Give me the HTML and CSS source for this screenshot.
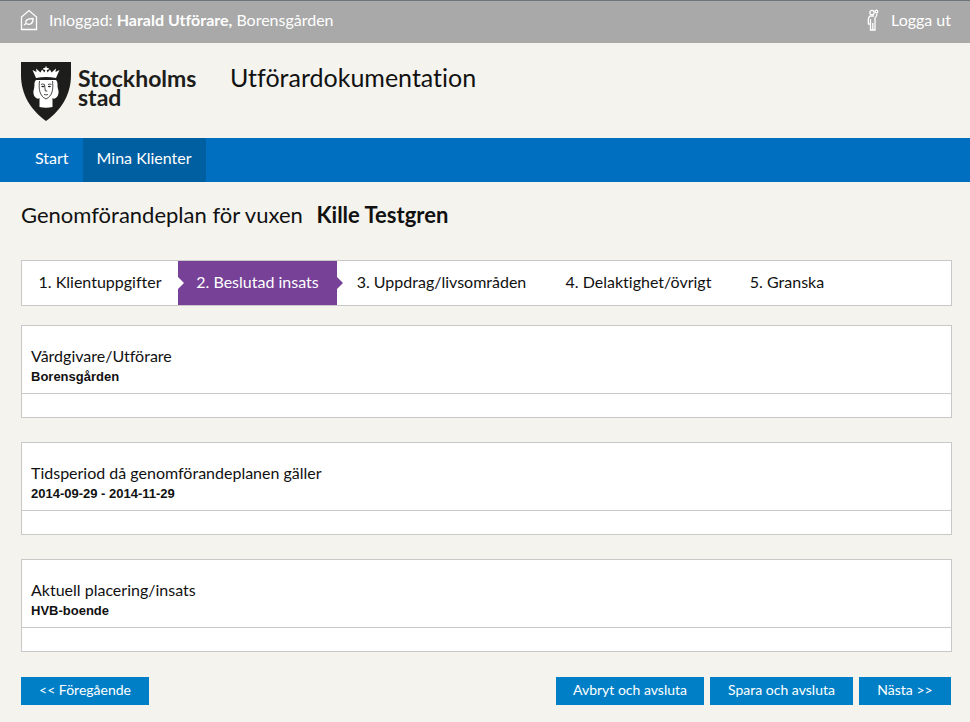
FILE: index.html
```html
<!DOCTYPE html>
<html lang="sv">
<head>
<meta charset="utf-8">
<meta name="viewport" content="width=device-width, initial-scale=1">
<title>Utförardokumentation</title>
<link rel="stylesheet" href="styles.css">
</head>
<body>
<div class="topbar">
  <div class="account">
    <svg class="icon-home" viewBox="0 0 18 22" aria-hidden="true">
      <path d="M1.500 20.500V8L9 1.500 16.500 8v12.500z"/>
      <path d="M4 16l2-1.500C5 11.500 7 9.500 13 9.500c.5 5-3 7-7 5"/>
    </svg>
    <span>Inloggad: <strong>Harald Utförare,</strong> Borensgården</span>
  </div>
  <a class="logout" href="#">
    <svg class="icon-person" viewBox="0 0 12 22" aria-hidden="true">
      <circle cx="5" cy="3.500" r="2.200"/>
      <circle cx="9.500" cy="2.500" r="1.300"/>
      <path d="M10 4.500c0 2-.8 3.500-2 4.500v12H3.500v-6H1.500c-.5-4-.5-7.500 2-8h3.500M3.500 10v5M5.800 14v7"/>
    </svg>
    <span>Logga ut</span>
  </a>
</div>
<header class="header">
  <a class="brand" href="#">
    <svg class="shield" viewBox="0 0 50 59" aria-hidden="true">
      <path fill="#1d1d1b" d="M0 0h50v13c0 20-10 35-25 46C10 48 0 33 0 13z"/>
      <g fill="#fff">
        <path d="M15 18c-2.500 3-1 5-2 9-1.500 4 0 8 3 9.500 1.200.4 2-.1 2.500-.6V45q6.500 1.500 13 0v-9.100c.5.500 1.300 1 2.500.6 3-1.500 4.500-5.500 3-9.500-1-4 .5-6-2-9z"/>
        <path d="M15 16L11.500 8l4 2-.5-3.500 4.500 4L21 7.500l2.500 3 .8-2.500-2-.5V6h2V4.500h1.400V6h2v1.500l-2 .5.8 2.500L29 7.500l1.500 3 4.500-4-.5 3.500 4-2L35 16q-10-2-20 0z"/>
      </g>
      <g fill="none" stroke="#1d1d1b" stroke-width=".8">
        <path d="M18.500 19c-1 8 0 15 6.500 18 6.500-3 7.500-10 6.500-18"/>
        <path d="M20 22.500q1.500-1 3.500 0l.8 6.500h2M27 22.500q2-1 3.500 0M23 32.500q2 .8 4 0"/>
      </g>
      <g fill="#1d1d1b">
        <ellipse cx="21.800" cy="24.500" rx="1.500" ry=".7"/>
        <ellipse cx="28.400" cy="24.500" rx="1.500" ry=".7"/>
      </g>
    </svg>
    <span class="brand-name"><span>Stockholms</span><span>stad</span></span>
  </a>
  <div class="app-title">Utförardokumentation</div>
</header>
<nav class="nav">
  <a href="#">Start</a>
  <a class="current" href="#" aria-current="page">Mina Klienter</a>
</nav>
<main class="content">
  <h1 class="page-title">Genomförandeplan för vuxen <strong>Kille Testgren</strong></h1>
  <nav class="steps" aria-label="Steg">
    <a href="#">1. Klientuppgifter</a>
    <a class="active" href="#" aria-current="step">2. Beslutad insats</a>
    <a href="#">3. Uppdrag/livsområden</a>
    <a href="#">4. Delaktighet/övrigt</a>
    <a href="#">5. Granska</a>
  </nav>
  <div class="cards">
    <section class="card">
      <h2>Vårdgivare/Utförare</h2>
      <p>Borensgården</p>
    </section>
    <section class="card">
      <h2>Tidsperiod då genomförandeplanen gäller</h2>
      <p>2014-09-29 - 2014-11-29</p>
    </section>
    <section class="card">
      <h2>Aktuell placering/insats</h2>
      <p>HVB-boende</p>
    </section>
  </div>
  <div class="actions">
    <button class="previous" type="button">&lt;&lt; Föregående</button>
    <button class="cancel" type="button">Avbryt och avsluta</button>
    <button class="save" type="button">Spara och avsluta</button>
    <button class="next" type="button">Nästa &gt;&gt;</button>
  </div>
</main>
</body>
</html>
```
FILE: styles.css
```css
* {
  box-sizing: border-box;
}

body {
  margin: 0;
  background: #f4f3ee;
  color: #111;
  font: 16px/20px Lato, sans-serif;
  font-variant-ligatures: none;
}

a {
  color: inherit;
  text-decoration: none;
}

.topbar {
  display: flex;
  justify-content: space-between;
  height: 43px;
  padding: 0 19px 0 20px;
  border-top: 1px solid #6d737c;
  background: #a9a9a9;
  color: #fff;
}

.account,
.logout {
  display: flex;
  align-items: center;
  padding-bottom: 4px;
}

.account {
  gap: 11px;
}

.logout {
  gap: 12px;
}

.topbar svg {
  height: 22px;
  fill: none;
  stroke: #fff;
  stroke-width: 1.3;
}

.icon-home {
  width: 18px;
}

.icon-person {
  width: 12px;
}

.header {
  display: flex;
  align-items: flex-start;
  gap: 32px;
  height: 95px;
  padding: 19px 21px 0;
}

.brand {
  display: flex;
  gap: 7px;
  color: #1d1d1b;
}

.shield {
  width: 50px;
  height: 59px;
}

.brand-name {
  display: grid;
  align-content: start;
  min-width: 120px;
  padding-top: 7px;
  font-size: 23px;
  font-weight: 700;
  line-height: 19px;
}

.app-title {
  font-size: 25px;
  line-height: 30px;
}

.nav {
  display: flex;
  height: 44px;
  padding-left: 21px;
  background: #006fc0;
  color: #fff;
}

.nav a {
  padding: 10px 14px;
}

.nav .current {
  background: #005fa1;
}

.content {
  padding: 19px 18px 17px 21px;
}

.page-title {
  margin: 0 0 32px;
  font-size: 22px;
  font-weight: 400;
  line-height: 27px;
}

.page-title strong {
  margin-left: 8px;
}

.steps {
  display: grid;
  grid-template-columns: 156px 159px 209px 185px 112px;
  border: 1px solid #c8c8c8;
  background: #fff;
}

.steps a {
  padding: 11px 0 13px;
  text-align: center;
}

.steps .active {
  position: relative;
  background: #764197;
  color: #fff;
}

.steps .active::before,
.steps .active::after {
  content: "";
  position: absolute;
  top: 16px;
  border: 6px solid transparent;
  border-right: 0;
}

.steps .active::before {
  left: 0;
  border-left-color: #fff;
}

.steps .active::after {
  left: 100%;
  border-left-color: #764197;
}

.cards {
  display: grid;
  gap: 24px;
  margin: 19px 0 25px;
}

.card {
  padding: 20px 0 23px;
  border: 1px solid #c8c8c8;
  background: #fff;
}

.card h2 {
  margin: 0;
  padding: 0 9px 1px;
  font-size: 16px;
  font-weight: 400;
  line-height: 20px;
}

.card p {
  margin: 0;
  padding: 0 9px 7px;
  border-bottom: 1px solid #c8c8c8;
  font: 700 13px/19px "Liberation Sans", sans-serif;
}

.actions {
  display: flex;
  gap: 6px;
  padding-right: 1px;
}

.actions button {
  height: 28px;
  padding: 0 0 2px;
  border: 0;
  background: #007fc6;
  color: #fff;
  font: 14px/20px Lato, sans-serif;
}

.actions .previous {
  width: 128px;
  margin-right: auto;
}

.actions .cancel {
  width: 148px;
}

.actions .save {
  width: 143px;
}

.actions .next {
  width: 92px;
}
```
